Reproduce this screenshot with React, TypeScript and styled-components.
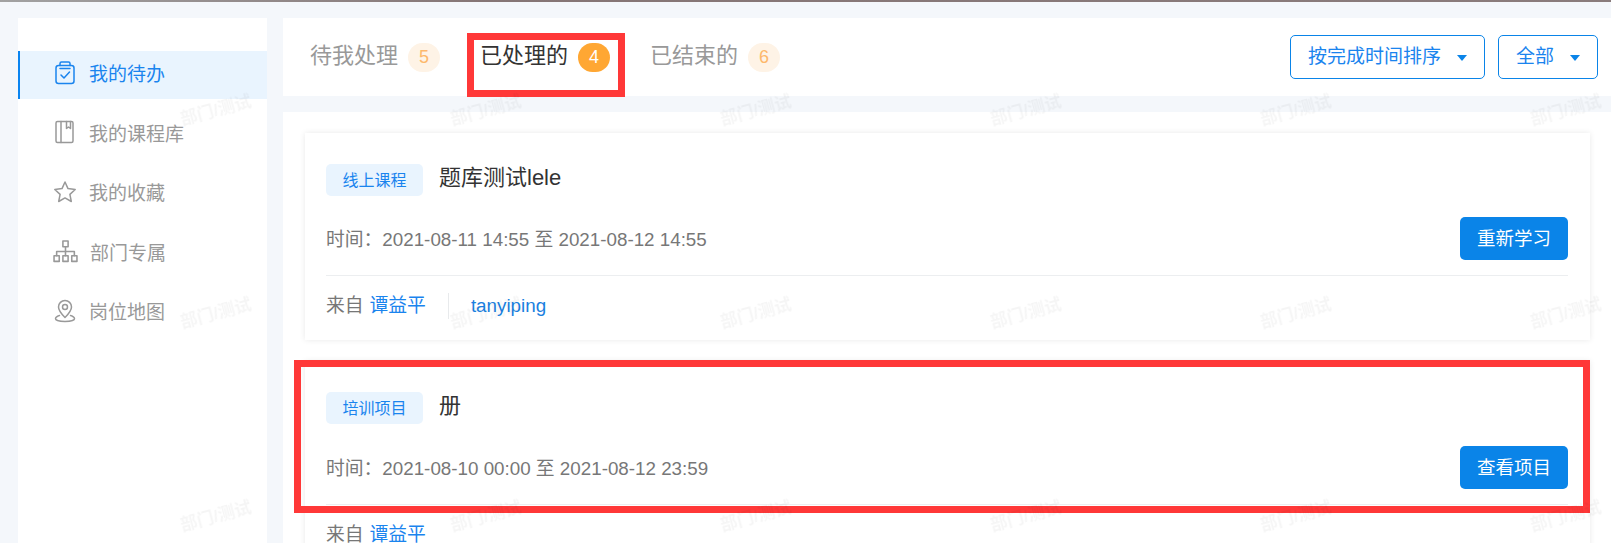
import React from 'react';
import styled, { createGlobalStyle } from 'styled-components';

const GlobalStyle = createGlobalStyle`
  html, body {
    margin: 0;
    padding: 0;
    height: 543px;
    overflow: hidden;
    background: #f4f7fb;
    font-family: "Liberation Sans", "Noto Sans CJK SC", sans-serif;
  }
`;

const Page = styled.div`
  position: relative;
  height: 543px;
  overflow: hidden;
`;

const TopStrip = styled.div`
  height: 2px;
  background: linear-gradient(90deg, #a2a2a2 0%, #857575 30%, #8a7c7c 100%);
`;

const Layout = styled.div`
  display: flex;
  gap: 16px;
  padding: 16px 0 0 18px;
`;

const Sidebar = styled.nav`
  flex: 0 0 249px;
  height: 525px;
  padding-top: 33px;
  box-sizing: border-box;
  background: #fff;
`;

const NavItem = styled.div<{ $active?: boolean }>`
  display: flex;
  align-items: center;
  gap: 12px;
  height: 48px;
  margin-bottom: 11.5px;
  padding: 0 0 5px 33px;
  box-sizing: border-box;
  font-size: 19px;
  color: ${(p) => (p.$active ? '#1a84ee' : '#999')};
  background: ${(p) => (p.$active ? '#e9f4fe' : 'transparent')};
  border-left: 2px solid ${(p) => (p.$active ? '#0a84f0' : 'transparent')};
`;

const NavIcon = styled.svg`
  flex: none;
  fill: none;
  stroke: currentColor;
  stroke-width: 1.5;
  stroke-linejoin: round;
  stroke-linecap: round;
`;

const Main = styled.main`
  flex: 1;
  display: flex;
  flex-direction: column;
  gap: 16px;
  min-width: 0;
`;

const Header = styled.header`
  display: flex;
  align-items: center;
  justify-content: space-between;
  height: 78px;
  padding: 0 13px 0 27px;
  background: #fff;
`;

const Tabs = styled.div`
  display: flex;
  align-items: center;
  gap: 40px;
`;

const Tab = styled.div<{ $active?: boolean }>`
  position: relative;
  display: flex;
  align-items: center;
  gap: 10px;
  height: 30px;
  font-size: 22px;
  color: ${(p) => (p.$active ? '#333' : '#999')};
`;

const TabLabel = styled.span`
  padding-bottom: 8px;
`;

const Badge = styled.span<{ $active?: boolean }>`
  display: flex;
  align-items: center;
  justify-content: center;
  width: 32px;
  height: 29px;
  border-radius: 15px;
  font-size: 18px;
  color: ${(p) => (p.$active ? '#fff' : '#fdb86c')};
  background: ${(p) => (p.$active ? '#ffa733' : '#fef3e6')};
`;

const TabHighlight = styled.div`
  position: absolute;
  left: -13px;
  right: -15px;
  top: -9px;
  bottom: -25px;
  border: 7px solid #ff3838;
  pointer-events: none;
`;

const Filters = styled.div`
  display: flex;
  gap: 13px;
`;

const FilterButton = styled.button`
  display: flex;
  align-items: center;
  height: 44px;
  padding: 0 17px 5px;
  gap: 16px;
  background: #fff;
  border: 1px solid #0a84e8;
  border-radius: 5px;
  font-family: inherit;
  font-size: 19px;
  color: #1a84ee;
`;

const Caret = styled.i`
  width: 0;
  height: 0;
  margin-top: 7px;
  border-left: 5px solid transparent;
  border-right: 5px solid transparent;
  border-top: 6px solid #0a84e8;
`;

const Content = styled.section`
  display: flex;
  flex-direction: column;
  gap: 21px;
  height: 431px;
  padding: 21px 21px 0 22px;
  background: #fff;
  overflow: hidden;
`;

const Card = styled.article`
  position: relative;
  flex: none;
  padding: 31px 22px 0 21px;
  background: #fff;
  box-shadow: 0 0 6px rgba(0, 0, 0, 0.09);
`;

const CardHighlight = styled.div`
  position: absolute;
  left: -11px;
  right: 0;
  top: -1px;
  height: 153px;
  box-sizing: border-box;
  border: 7px solid #ff3838;
  pointer-events: none;
`;

const TitleRow = styled.div`
  display: flex;
  align-items: center;
  gap: 16px;
`;

const Tag = styled.span`
  display: flex;
  align-items: center;
  justify-content: center;
  width: 97px;
  height: 31.5px;
  padding-bottom: 2px;
  box-sizing: border-box;
  border-radius: 5px;
  font-size: 16px;
  color: #1a84ee;
  background: #e9f4fe;
`;

const Title = styled.h3`
  margin: 0 0 4px;
  font-size: 22px;
  font-weight: 400;
  line-height: 27.5px;
  color: #333;
`;

const TimeRow = styled.div`
  display: flex;
  align-items: center;
  justify-content: space-between;
  margin-top: 21.9px;
  padding-bottom: 15px;
  border-bottom: 1px solid #eceef0;
  font-size: 18.8px;
  color: #777;
`;

const TimeText = styled.span`
  padding-bottom: 2px;
`;

const ActionButton = styled.button`
  width: 108px;
  height: 43px;
  padding: 0 0 3px;
  border: 0;
  border-radius: 5px;
  background: #0a84e8;
  font-family: inherit;
  font-size: 18.5px;
  color: #fff;
`;

const Footer = styled.div`
  display: flex;
  align-items: center;
  height: 64px;
  padding-bottom: 4px;
  box-sizing: border-box;
  font-size: 18.8px;
  color: #777;
`;

const Author = styled.span`
  display: flex;
  gap: 6px;
  padding-right: 22px;
  line-height: 26px;
`;

const Account = styled.span`
  padding-left: 22px;
  line-height: 26px;
  border-left: 1px solid #e8eaec;
  color: #1a7fe0;
`;

const Link = styled.span`
  color: #1a84ee;
`;

const WatermarkLayer = styled.div`
  position: absolute;
  inset: 0;
  display: grid;
  grid-template-columns: repeat(6, 270px);
  grid-auto-rows: 203px;
  padding: 7px 0 0 80px;
  pointer-events: none;
`;

const Watermark = styled.span`
  align-self: center;
  justify-self: center;
  font-size: 17px;
  font-weight: 700;
  white-space: nowrap;
  color: rgba(0, 0, 0, 0.04);
  filter: blur(0.4px);
  transform: rotate(-15deg);
`;

const navItems = [
  {
    label: '我的待办',
    size: 24,
    icon: (
      <>
        <rect x="3" y="4.5" width="18" height="18" rx="2.5" />
        <path d="M7 4.5V2.5A1.5 1.5 0 0 1 8.5 1h7A1.5 1.5 0 0 1 17 2.5v2" />
        <path d="M7 7.5h10M8 14l3 3 5.5-6" />
      </>
    ),
  },
  {
    label: '我的课程库',
    size: 24,
    icon: (
      <>
        <rect x="3" y="1.5" width="17" height="21" rx="1.5" />
        <path d="M8 1.5v21M13.5 1.5v7l2-1.5 2 1.5v-7" />
      </>
    ),
  },
  {
    label: '我的收藏',
    size: 24,
    icon: (
      <path d="M12 2l3 6.6 7.2.9-5.3 4.9 1.4 7.1L12 17.9l-6.3 3.6 1.4-7.1L1.8 9.5 9 8.6z" />
    ),
  },
  {
    label: '部门专属',
    size: 25,
    icon: (
      <>
        <rect x="9.5" y="2" width="5" height="5.5" />
        <rect x="1" y="16" width="5" height="5.5" />
        <rect x="9.5" y="16" width="5" height="5.5" />
        <rect x="18" y="16" width="5" height="5.5" />
        <path d="M12 7.5V16M3.5 16v-4h17v4" />
      </>
    ),
  },
  {
    label: '岗位地图',
    size: 24,
    icon: (
      <>
        <path d="M12 18.5c-3.5-3.5-6.5-6.5-6.5-10.5a6.5 6.5 0 0 1 13 0c0 4-3 7-6.5 10.5z" />
        <circle cx="12" cy="8" r="2.5" />
        <path d="M6.5 16.5C4 17.2 2.5 18.3 2.5 19.8c0 1.5 4 2.7 9.5 2.7s9.5-1.2 9.5-2.7c0-1.5-1.5-2.6-4-3.3" />
      </>
    ),
  },
];

const tabs = [
  { label: '待我处理', count: 5 },
  { label: '已处理的', count: 4, active: true },
  { label: '已结束的', count: 6 },
];

const courses = [
  {
    tag: '线上课程',
    title: '题库测试lele',
    time: '时间\uFF1A2021-08-11 14:55 至 2021-08-12 14:55',
    action: '重新学习',
    account: 'tanyiping',
  },
  {
    tag: '培训项目',
    title: '册',
    time: '时间\uFF1A2021-08-10 00:00 至 2021-08-12 23:59',
    action: '查看项目',
    highlighted: true,
  },
];

const App = () => {
  return (
    <Page>
      <GlobalStyle />
      <TopStrip />
      <Layout>
        <Sidebar>
          {navItems.map((item, i) => (
            <NavItem key={item.label} $active={i === 0}>
              <NavIcon width={item.size} height={item.size} viewBox="0 0 24 24">
                {item.icon}
              </NavIcon>
              {item.label}
            </NavItem>
          ))}
        </Sidebar>
        <Main>
          <Header>
            <Tabs>
              {tabs.map((tab) => (
                <Tab key={tab.label} $active={tab.active}>
                  <TabLabel>{tab.label}</TabLabel>
                  <Badge $active={tab.active}>{tab.count}</Badge>
                  {tab.active && <TabHighlight />}
                </Tab>
              ))}
            </Tabs>
            <Filters>
              <FilterButton>
                按完成时间排序
                <Caret />
              </FilterButton>
              <FilterButton>
                全部
                <Caret />
              </FilterButton>
            </Filters>
          </Header>
          <Content>
            {courses.map((course) => (
              <Card key={course.tag}>
                <TitleRow>
                  <Tag>{course.tag}</Tag>
                  <Title>{course.title}</Title>
                </TitleRow>
                <TimeRow>
                  <TimeText>{course.time}</TimeText>
                  <ActionButton>{course.action}</ActionButton>
                </TimeRow>
                <Footer>
                  <Author>
                    来自
                    <Link>谭益平</Link>
                  </Author>
                  {course.account && <Account>{course.account}</Account>}
                </Footer>
                {course.highlighted && <CardHighlight />}
              </Card>
            ))}
          </Content>
        </Main>
      </Layout>
      <WatermarkLayer>
        {Array.from({ length: 18 }, (_, i) => (
          <Watermark key={i}>部门/测试</Watermark>
        ))}
      </WatermarkLayer>
    </Page>
  );
};

export default App;
